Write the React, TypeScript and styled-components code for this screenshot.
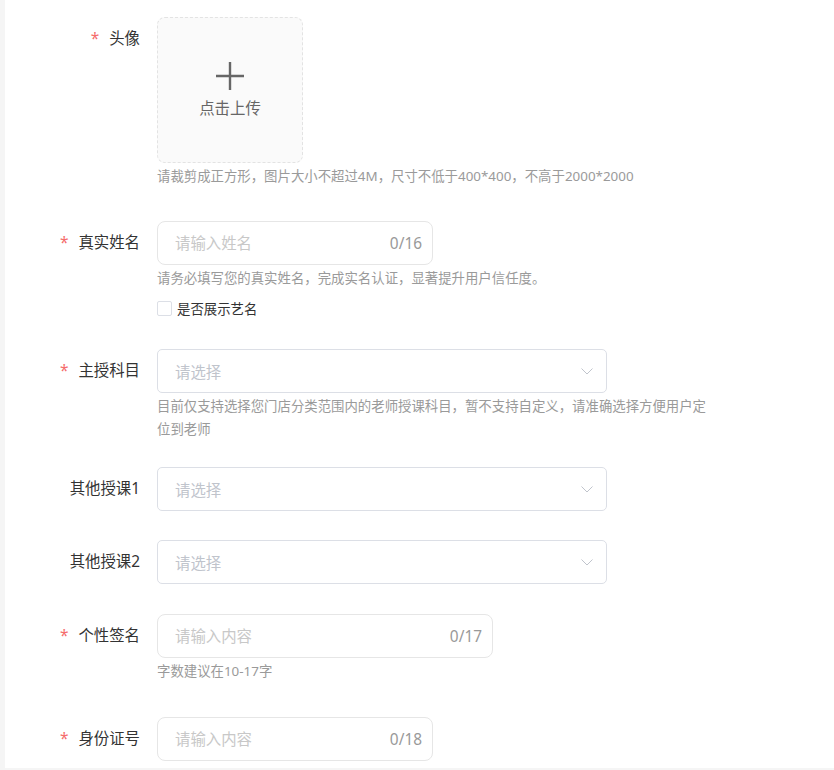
import React from "react";
import styled, { createGlobalStyle } from "styled-components";

const GlobalStyle = createGlobalStyle`
  html, body {
    margin: 0;
    padding: 0;
    background: #f5f5f5;
  }
  body {
    font-family: "Noto Sans", "Noto Sans CJK SC", sans-serif;
    color: #333;
  }
`;

const Panel = styled.div`
  margin-left: 5px;
  height: 768px;
  box-sizing: border-box;
  padding-top: 17px;
  background: #fff;
  overflow: hidden;
`;

const FormItem = styled.div<{ $mb: number }>`
  display: grid;
  grid-template-columns: 135px 1fr;
  column-gap: 17px;
  margin-bottom: ${(p) => p.$mb}px;
`;

const Label = styled.div`
  text-align: right;
  font-size: 15.4px;
  font-weight: 400;
  line-height: 44px;
  color: #333;
  white-space: nowrap;
`;

const Required = styled.span`
  color: #f56c6c;
  margin-right: 10px;
`;

const Control = styled.div`
  display: flex;
  flex-direction: column;
  align-items: flex-start;
  min-width: 0;
`;

const Upload = styled.div`
  width: 146px;
  height: 146px;
  box-sizing: border-box;
  border: 1px dashed #e3e3e3;
  border-radius: 8px;
  background: #fafafa;
  display: flex;
  flex-direction: column;
  align-items: center;
  padding-top: 43px;
  gap: 8px;
  color: #666;
  font-size: 15.4px;
  line-height: 20px;
  cursor: pointer;
`;

const Hint = styled.div`
  margin-top: 2px;
  max-width: 554px;
  font-size: 13.4px;
  line-height: 23px;
  color: #9a9a9a;
`;

const TextBox = styled.div<{ $width: number }>`
  width: ${(p) => p.$width}px;
  height: 44px;
  box-sizing: border-box;
  border: 1px solid #e6e6e6;
  border-radius: 8px;
  display: flex;
  align-items: center;
  padding: 0 10px 0 17px;
  background: #fff;
`;

const Input = styled.input`
  flex: 1;
  min-width: 0;
  border: none;
  outline: none;
  padding: 0;
  font-family: inherit;
  font-size: 15.4px;
  color: #333;
  background: transparent;
  &::placeholder {
    color: #c8c8c8;
  }
`;

const Counter = styled.span`
  font-size: 15.4px;
  color: #999;
`;

const SelectBox = styled.div`
  width: 450px;
  height: 44px;
  box-sizing: border-box;
  border: 1px solid #dcdfe6;
  border-radius: 5px;
  display: flex;
  align-items: center;
  justify-content: space-between;
  padding: 0 13px 0 17px;
  cursor: pointer;
`;

const Placeholder = styled.span`
  font-size: 15.4px;
  color: #c0c4cc;
`;

const CheckRow = styled.label`
  margin-top: 7px;
  height: 22px;
  display: flex;
  align-items: center;
  gap: 5px;
  font-size: 13.4px;
  color: #333;
  cursor: pointer;
`;

const CheckBox = styled.span`
  width: 15px;
  height: 15px;
  box-sizing: border-box;
  border: 1px solid #dcdfe6;
  border-radius: 2px;
  background: #fff;
`;

const PlusIcon = () => (
  <svg width="30" height="30" viewBox="0 0 30 30">
    <path d="M15 1v28M1 15h28" stroke="#666" strokeWidth="2.4" fill="none" />
  </svg>
);

const Chevron = () => (
  <svg width="12" height="7" viewBox="0 0 12 7">
    <polyline points="0.5,0.5 6,6 11.5,0.5" stroke="#c0c4cc" strokeWidth="1" fill="none" />
  </svg>
);

const Select = () => (
  <SelectBox>
    <Placeholder>请选择</Placeholder>
    <Chevron />
  </SelectBox>
);

const Field = ({ width, placeholder, max }: { width: number; placeholder: string; max: number }) => (
  <TextBox $width={width}>
    <Input placeholder={placeholder} maxLength={max} />
    <Counter>0/{max}</Counter>
  </TextBox>
);

const App = () => (
  <>
    <GlobalStyle />
    <Panel>
      <FormItem $mb={33}>
        <Label>
          <Required>*</Required>头像
        </Label>
        <Control>
          <Upload>
            <PlusIcon />
            <span>点击上传</span>
          </Upload>
          <Hint>请裁剪成正方形，图片大小不超过4M，尺寸不低于400*400，不高于2000*2000</Hint>
        </Control>
      </FormItem>

      <FormItem $mb={30}>
        <Label>
          <Required>*</Required>真实姓名
        </Label>
        <Control>
          <Field width={276} placeholder="请输入姓名" max={16} />
          <Hint>请务必填写您的真实姓名，完成实名认证，显著提升用户信任度。</Hint>
          <CheckRow>
            <CheckBox />
            是否展示艺名
          </CheckRow>
        </Control>
      </FormItem>

      <FormItem $mb={26}>
        <Label>
          <Required>*</Required>主授科目
        </Label>
        <Control>
          <Select />
          <Hint>目前仅支持选择您门店分类范围内的老师授课科目，暂不支持自定义，请准确选择方便用户定位到老师</Hint>
        </Control>
      </FormItem>

      <FormItem $mb={29}>
        <Label>其他授课1</Label>
        <Control>
          <Select />
        </Control>
      </FormItem>

      <FormItem $mb={30}>
        <Label>其他授课2</Label>
        <Control>
          <Select />
        </Control>
      </FormItem>

      <FormItem $mb={34}>
        <Label>
          <Required>*</Required>个性签名
        </Label>
        <Control>
          <Field width={336} placeholder="请输入内容" max={17} />
          <Hint>字数建议在10-17字</Hint>
        </Control>
      </FormItem>

      <FormItem $mb={0}>
        <Label>
          <Required>*</Required>身份证号
        </Label>
        <Control>
          <Field width={276} placeholder="请输入内容" max={18} />
        </Control>
      </FormItem>
    </Panel>
  </>
);

export default App;
